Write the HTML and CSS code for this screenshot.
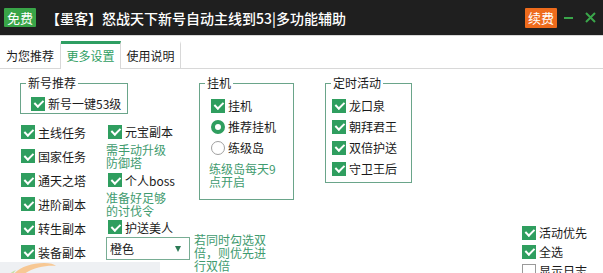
FILE: index.html
```html
<!DOCTYPE html>
<html lang="zh-CN">
<head>
<meta charset="utf-8">
<title>怒战天下辅助</title>
<link rel="stylesheet" href="styles.css">
</head>
<body>
<div class="window">
  <header class="titlebar">
    <span class="badge free">免费</span>
    <span class="title">【墨客】怒战天下新号自动主线到53|多功能辅助</span>
    <span class="badge renew">续费</span>
    <svg class="winbtn min" width="11" height="11" viewBox="0 0 11 11"><line x1="1" y1="6" x2="10" y2="6" stroke="#3aa64a" stroke-width="2"/></svg>
    <svg class="winbtn close" width="11" height="11" viewBox="0 0 11 11"><path d="M1 1 L10 10 M10 1 L1 10" stroke="#3aa64a" stroke-width="2"/></svg>
  </header>

  <nav class="tabs">
    <div class="tab t1">为您推荐</div>
    <div class="tab t2 active">更多设置</div>
    <div class="tab t3">使用说明</div>
  </nav>

  <main class="content">
    <div class="col-left">
      <fieldset class="grp grp-new">
        <legend>新号推荐</legend>
        <div class="grp-body">
          <label class="chk row19"><span class="box on"></span>新号一键53级</label>
        </div>
      </fieldset>
      <div class="task-cols">
        <div class="tcol tcol1">
          <label class="chk row24"><span class="box on"></span>主线任务</label>
          <label class="chk row24"><span class="box on"></span>国家任务</label>
          <label class="chk row24"><span class="box on"></span>通天之塔</label>
          <label class="chk row24"><span class="box on"></span>进阶副本</label>
          <label class="chk row24"><span class="box on"></span>转生副本</label>
          <label class="chk row24"><span class="box on"></span>装备副本</label>
        </div>
        <div class="tcol tcol2">
          <label class="chk r-a"><span class="box on"></span>元宝副本</label>
          <p class="note n-a">需手动升级<br>防御塔</p>
          <label class="chk r-b"><span class="box on"></span>个人boss</label>
          <p class="note n-b">准备好足够<br>的讨伐令</p>
          <label class="chk r-c"><span class="box on"></span>护送美人</label>
          <div class="select">橙色</div>
        </div>
      </div>
    </div>

    <div class="col-mid">
      <fieldset class="grp grp-hang">
        <legend>挂机</legend>
        <div class="grp-body">
          <label class="chk row21"><span class="box on"></span>挂机</label>
          <label class="chk row21"><span class="radio on"></span>推荐挂机</label>
          <label class="chk row21"><span class="radio"></span>练级岛</label>
          <p class="note n-hang">练级岛每天9<br>点开启</p>
        </div>
      </fieldset>
      <p class="note n-double">若同时勾选双<br>倍，则优先进<br>行双倍</p>
    </div>

    <div class="col-timer">
      <fieldset class="grp grp-timer">
        <legend>定时活动</legend>
        <div class="grp-body">
          <label class="chk row21"><span class="box on"></span>龙口泉</label>
          <label class="chk row21"><span class="box on"></span>朝拜君王</label>
          <label class="chk row21"><span class="box on"></span>双倍护送</label>
          <label class="chk row21"><span class="box on"></span>守卫王后</label>
        </div>
      </fieldset>
    </div>

    <div class="col-right">
      <label class="chk row19"><span class="box on"></span>活动优先</label>
      <label class="chk row19"><span class="box on"></span>全选</label>
      <label class="chk row19"><span class="box off"></span>显示日志</label>
    </div>
  </main>

  <div class="logo-peek">
    <svg width="70" height="14" viewBox="0 0 70 14">
      <path d="M12 14 C18 6 30 1 44 1 C50 1 54 2 56 4 C46 3 30 6 22 14 Z" fill="#f7c894"/>
      <path d="M8 14 C10 11 13 9 16 8 C14 10 13 12 13 14 Z" fill="#c9dfa8"/>
    </svg>
  </div>
</div>
</body>
</html>
```

FILE: styles.css
```css
body {
  margin: 0;
  width: 603px;
  height: 273px;
  overflow: hidden;
  background: #fff;
  font-family: "Noto Sans CJK SC", "Microsoft YaHei", sans-serif;
  font-size: 12px;
  color: #1a1a1a;
}

.window {
  position: relative;
  width: 603px;
  height: 273px;
  overflow: hidden;
}

/* title bar */
.titlebar {
  height: 35px;
  box-sizing: border-box;
  background: #1f1f1f;
  display: flex;
  align-items: center;
  padding-left: 4px;
}

.badge {
  height: 19px;
  line-height: 19px;
  color: #fff;
  font-size: 13px;
  padding: 0 3px;
  border-radius: 1px;
}

.free {
  background: #39a548;
}

.title {
  margin-left: 10px;
  color: #fff;
  font-size: 14px;
  font-weight: 500;
  white-space: nowrap;
}

.renew {
  margin-left: auto;
  background: #ee6b1c;
  height: 20px;
  line-height: 20px;
}

.winbtn {
  flex: none;
}

.min {
  margin-left: 6px;
}

.close {
  margin-left: 11px;
  margin-right: 7px;
}

/* tabs */
.tabs {
  display: flex;
  border-top: 1px solid #d8d8d8;
  border-bottom: 1px solid #d8d8d8;
  padding-top: 5px;
  height: 27px;
}

.tab {
  box-sizing: border-box;
  height: 27px;
  line-height: 23px;
  border-top: 3px solid transparent;
  border-right: 1px solid #d8d8d8;
  text-align: center;
  font-size: 12px;
  color: #1a1a1a;
  background: #fff;
}

.t1 { width: 61px; }
.t2 { width: 60px; }
.t3 { width: 60px; }

.tab.active {
  border-top-color: #2f9e62;
  color: #2f9e62;
  height: 28px;
  margin-bottom: -1px;
  position: relative;
}

/* content */
.content {
  display: flex;
  padding: 7px 0 0 20px;
}

.col-left {
  width: 174px;
  flex: none;
}

.grp {
  margin: 0;
  padding: 0;
  border: 1px solid #6aa58a;
  min-width: 0;
  box-sizing: border-box;
}

.grp legend {
  margin-left: 5px;
  padding: 0 2px;
  line-height: 14px;
  font-size: 12px;
  color: #1a1a1a;
}

.grp-new {
  width: 108px;
}

.grp-new .grp-body {
  padding: 4px 0 0 10px;
}

.chk {
  display: flex;
  align-items: center;
  gap: 3px;
  white-space: nowrap;
  box-sizing: border-box;
}

.row19 { height: 19px; }
.row21 { height: 21px; }
.row24 { height: 24px; }

.box {
  width: 14px;
  height: 14px;
  box-sizing: border-box;
  flex: none;
  position: relative;
}

.box.on {
  background: #2f9e5f;
}

.box.on::after {
  content: "";
  position: absolute;
  left: 4.5px;
  top: 1.5px;
  width: 3.5px;
  height: 7px;
  border: solid #fff;
  border-width: 0 2px 2px 0;
  transform: rotate(45deg);
}

.box.off {
  background: #fff;
  border: 1px solid #9a9a9a;
}

.radio {
  width: 14px;
  height: 14px;
  box-sizing: border-box;
  flex: none;
  border-radius: 50%;
  border: 1px solid #a0a0a0;
  background: #fff;
}

.radio.on {
  border: 4px solid #2f9e5f;
}

.note {
  margin: 0;
  color: #3f9b6f;
  font-size: 12px;
  line-height: 13px;
  white-space: nowrap;
}

.task-cols {
  display: flex;
  margin-top: 6px;
}

.tcol1 {
  width: 86px;
  flex: none;
}

.tcol1 .chk {
  padding-left: 1px;
}

.tcol2 {
  width: 88px;
  flex: none;
}

.tcol2 .chk {
  padding-left: 2px;
}

.r-a { height: 23px; }
.n-a { height: 26px; }
.r-b { height: 22px; }
.n-b { height: 26px; }
.r-c { height: 20px; }

.select {
  width: 84px;
  height: 23px;
  box-sizing: border-box;
  border: 1px solid #78ad94;
  display: flex;
  align-items: center;
  padding-left: 3px;
  color: #1a1a1a;
}

.select::after {
  content: "";
  margin-left: auto;
  margin-right: 8px;
  border-left: 3.5px solid transparent;
  border-right: 3.5px solid transparent;
  border-top: 6px solid #2b7a55;
}

/* middle column */
.col-mid {
  width: 100px;
  flex: none;
}

.grp-hang {
  margin-left: 5px;
  width: 95px;
}

.grp-hang .grp-body {
  padding: 5px 0 11px 11px;
}

.n-hang {
  margin: 4px 0 0 -2px;
  height: 26px;
}

.n-double {
  margin-top: 33px;
}

/* timer column */
.col-timer {
  margin-left: 31px;
  flex: none;
}

.grp-timer {
  width: 87px;
}

.grp-timer .grp-body {
  padding: 5px 0 3px 6px;
}

/* right column */
.col-right {
  margin-left: 110px;
  padding-top: 147px;
  flex: none;
}

/* floating logo fragment at the bottom */
.logo-peek {
  position: absolute;
  left: 0;
  top: 262px;
  width: 160px;
  height: 14px;
  background: #eef0f3;
}

.logo-peek svg {
  display: block;
}
```
